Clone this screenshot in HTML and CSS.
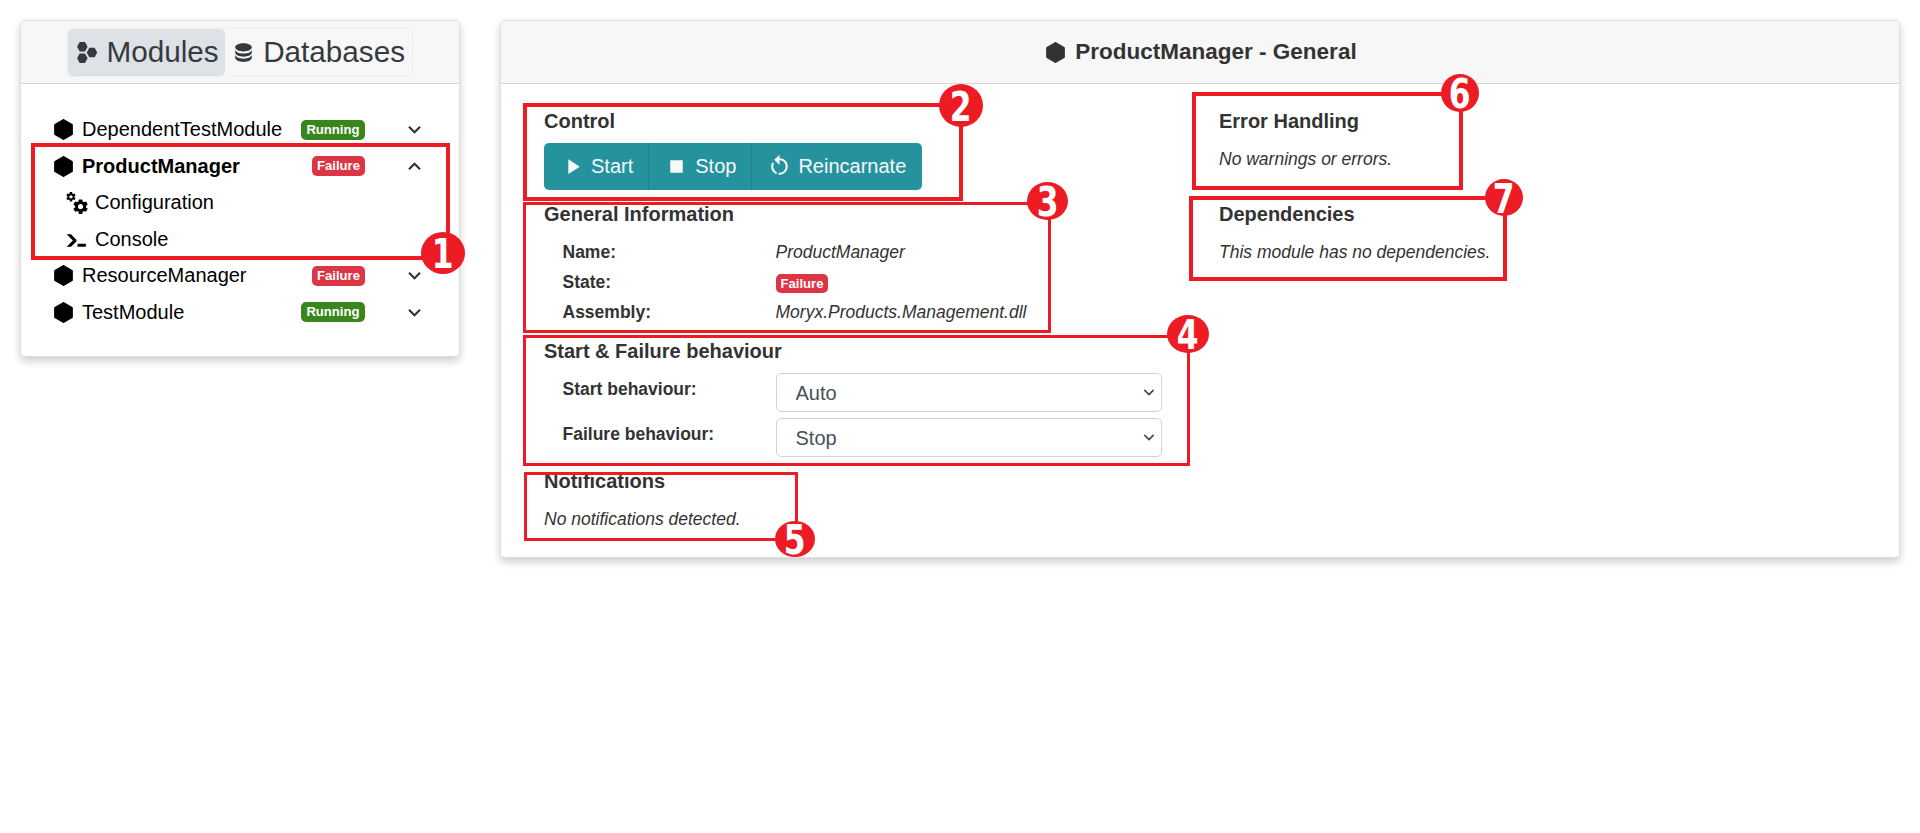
FILE: index.html
```html
<!DOCTYPE html>
<html lang="en">
<head>
    <meta charset="UTF-8">
    <meta name="viewport" content="width=device-width, initial-scale=1.0">
    <title>Modules</title>
    <link rel="stylesheet" href="styles.css">
</head>
<body>
    <div class="page">
        <aside class="card side">
            <div class="card-header">
                <nav class="pills">
                    <a class="pill active">
                        <svg class="icon" viewBox="0 0 24 24"><path d="M10.25,2C10.44,2 10.61,2.11 10.69,2.26L12.91,6.22L13,6.5L12.91,6.78L10.69,10.74C10.61,10.89 10.44,11 10.25,11H5.75C5.56,11 5.39,10.89 5.31,10.74L3.09,6.78L3,6.5L3.09,6.22L5.31,2.26C5.39,2.11 5.56,2 5.75,2H10.25M10.25,13C10.44,13 10.61,13.11 10.69,13.26L12.91,17.22L13,17.5L12.91,17.78L10.69,21.74C10.61,21.89 10.44,22 10.25,22H5.75C5.56,22 5.39,21.89 5.31,21.74L3.09,17.78L3,17.5L3.09,17.22L5.31,13.26C5.39,13.11 5.56,13 5.75,13H10.25M19.5,7.5C19.69,7.5 19.86,7.61 19.94,7.76L22.16,11.72L22.25,12L22.16,12.28L19.94,16.24C19.86,16.39 19.69,16.5 19.5,16.5H15C14.81,16.5 14.64,16.39 14.56,16.24L12.34,12.28L12.25,12L12.34,11.72L14.56,7.76C14.64,7.61 14.81,7.5 15,7.5H19.5Z"/></svg>
                        Modules
                    </a>
                    <a class="pill">
                        <svg class="icon" viewBox="0 0 24 24"><path d="M12,3C7.58,3 4,4.79 4,7C4,9.21 7.58,11 12,11C16.42,11 20,9.21 20,7C20,4.79 16.42,3 12,3M4,9V12C4,14.21 7.58,16 12,16C16.42,16 20,14.21 20,12V9C20,11.21 16.42,13 12,13C7.58,13 4,11.21 4,9M4,14V17C4,19.21 7.58,21 12,21C16.42,21 20,19.21 20,17V14C20,16.21 16.42,18 12,18C7.58,18 4,16.21 4,14Z"/></svg>
                        Databases
                    </a>
                </nav>
            </div>
            <ul class="modules">
                <li class="module">
                    <svg class="icon" viewBox="0 0 24 24"><use href="#hexagon"/></svg>
                    <span class="module-name">DependentTestModule</span>
                    <span class="badge running">Running</span>
                    <svg class="icon chevron" viewBox="0 0 24 24"><path d="M7.41,8.58L12,13.17L16.59,8.58L18,10L12,16L6,10L7.41,8.58Z"/></svg>
                </li>
                <li class="module selected">
                    <svg class="icon" viewBox="0 0 24 24"><use href="#hexagon"/></svg>
                    <span class="module-name">ProductManager</span>
                    <span class="badge failure">Failure</span>
                    <svg class="icon chevron" viewBox="0 0 24 24"><path d="M7.41,15.41L12,10.83L16.59,15.41L18,14L12,8L6,14L7.41,15.41Z"/></svg>
                </li>
                <li class="module sub">
                    <svg class="icon" viewBox="0 0 24 24"><path d="M15.9,18.45C17.25,18.45 18.35,17.35 18.35,16C18.35,14.65 17.25,13.55 15.9,13.55C14.54,13.55 13.45,14.65 13.45,16C13.45,17.35 14.54,18.45 15.9,18.45M21.1,16.68L22.58,17.84C22.71,17.95 22.75,18.13 22.66,18.29L21.26,20.71C21.17,20.86 21,20.92 20.83,20.86L19.09,20.16C18.73,20.44 18.34,20.67 17.91,20.85L17.64,22.7C17.62,22.87 17.47,23 17.3,23H14.5C14.32,23 14.18,22.87 14.15,22.7L13.89,20.85C13.46,20.67 13.07,20.44 12.71,20.16L10.96,20.86C10.81,20.92 10.62,20.86 10.54,20.71L9.14,18.29C9.05,18.13 9.09,17.95 9.22,17.84L10.7,16.68L10.65,16L10.7,15.31L9.22,14.16C9.09,14.05 9.05,13.86 9.14,13.71L10.54,11.29C10.62,11.13 10.81,11.07 10.96,11.13L12.71,11.84C13.07,11.56 13.46,11.32 13.89,11.15L14.15,9.29C14.18,9.13 14.32,9 14.5,9H17.3C17.47,9 17.62,9.13 17.64,9.29L17.91,11.15C18.34,11.32 18.73,11.56 19.09,11.84L20.83,11.13C21,11.07 21.17,11.13 21.26,11.29L22.66,13.71C22.75,13.86 22.71,14.05 22.58,14.16L21.1,15.31L21.15,16L21.1,16.68M6.69,8.07C7.56,8.07 8.26,7.37 8.26,6.5C8.26,5.63 7.56,4.92 6.69,4.92A1.58,1.58 0 0,0 5.11,6.5C5.11,7.37 5.82,8.07 6.69,8.07M10.03,6.94L11,7.68C11.07,7.75 11.09,7.87 11.03,7.97L10.13,9.53C10.08,9.63 9.96,9.67 9.86,9.63L8.74,9.18L8,9.62L7.81,10.81C7.79,10.92 7.7,11 7.59,11H5.79C5.67,11 5.58,10.92 5.56,10.81L5.4,9.62L4.64,9.18L3.5,9.63C3.41,9.67 3.3,9.63 3.24,9.53L2.34,7.97C2.28,7.87 2.31,7.75 2.39,7.68L3.34,6.94L3.31,6.5L3.34,6.06L2.39,5.32C2.31,5.25 2.28,5.13 2.34,5.03L3.24,3.47C3.3,3.37 3.41,3.33 3.5,3.37L4.63,3.82L5.4,3.38L5.56,2.19C5.58,2.08 5.67,2 5.79,2H7.59C7.7,2 7.79,2.08 7.81,2.19L8,3.38L8.74,3.82L9.86,3.37C9.96,3.33 10.08,3.37 10.13,3.47L11.03,5.03C11.09,5.13 11.07,5.25 11,5.32L10.03,6.06L10.06,6.5L10.03,6.94Z"/></svg>
                    <span class="module-name">Configuration</span>
                </li>
                <li class="module sub">
                    <svg class="icon" viewBox="0 0 24 24"><path d="M13,19V16H21V19H13M8.5,13L2.47,7H6.71L11.67,11.95C12.25,12.54 12.25,13.5 11.67,14.07L6.74,19H2.5L8.5,13Z"/></svg>
                    <span class="module-name">Console</span>
                </li>
                <li class="module">
                    <svg class="icon" viewBox="0 0 24 24"><use href="#hexagon"/></svg>
                    <span class="module-name">ResourceManager</span>
                    <span class="badge failure">Failure</span>
                    <svg class="icon chevron" viewBox="0 0 24 24"><path d="M7.41,8.58L12,13.17L16.59,8.58L18,10L12,16L6,10L7.41,8.58Z"/></svg>
                </li>
                <li class="module">
                    <svg class="icon" viewBox="0 0 24 24"><use href="#hexagon"/></svg>
                    <span class="module-name">TestModule</span>
                    <span class="badge running">Running</span>
                    <svg class="icon chevron" viewBox="0 0 24 24"><path d="M7.41,8.58L12,13.17L16.59,8.58L18,10L12,16L6,10L7.41,8.58Z"/></svg>
                </li>
            </ul>
        </aside>

        <main class="card detail">
            <div class="card-header detail-header">
                <svg class="icon" viewBox="0 0 24 24"><use href="#hexagon"/></svg>
                <h4>ProductManager - General</h4>
            </div>
            <div class="detail-body">
                <div class="column">
                    <section>
                        <h5>Control</h5>
                        <div class="btn-group">
                            <button class="btn" type="button">
                                <svg class="icon" viewBox="0 0 24 24"><path d="M8,5.14V19.14L19,12.14L8,5.14Z"/></svg>
                                Start
                            </button>
                            <button class="btn" type="button">
                                <svg class="icon" viewBox="0 0 24 24"><path d="M18,18H6V6H18V18Z"/></svg>
                                Stop
                            </button>
                            <button class="btn" type="button">
                                <svg class="icon" viewBox="0 0 24 24"><path d="M12,4C14.1,4 16.1,4.8 17.6,6.3C20.7,9.4 20.7,14.5 17.6,17.6C15.8,19.5 13.3,20.2 10.9,19.9L11.4,17.9C13.1,18.1 14.9,17.5 16.2,16.2C18.5,13.9 18.5,10.1 16.2,7.7C15.1,6.6 13.5,6 12,6V10.6L7,5.6L12,0.6V4M6.3,17.6C3.7,15 3.3,11 5.1,7.9L6.6,9.4C5.5,11.6 5.9,14.4 7.8,16.2C8.3,16.7 8.9,17.1 9.6,17.4L9,19.4C8,19 7.1,18.4 6.3,17.6Z"/></svg>
                                Reincarnate
                            </button>
                        </div>
                    </section>
                    <section>
                        <h5 class="tight">General Information</h5>
                        <div class="info-row"><span class="label">Name:</span><em>ProductManager</em></div>
                        <div class="info-row"><span class="label">State:</span><span class="badge failure state">Failure</span></div>
                        <div class="info-row"><span class="label">Assembly:</span><em>Moryx.Products.Management.dll</em></div>
                    </section>
                    <section>
                        <h5>Start &amp; Failure behaviour</h5>
                        <div class="form-row">
                            <label class="label" for="startBehaviour">Start behaviour:</label>
                            <select id="startBehaviour"><option>Auto</option></select>
                        </div>
                        <div class="form-row">
                            <label class="label" for="failureBehaviour">Failure behaviour:</label>
                            <select id="failureBehaviour"><option>Stop</option></select>
                        </div>
                    </section>
                    <section>
                        <h5>Notifications</h5>
                        <p class="note">No notifications detected.</p>
                    </section>
                </div>
                <div class="column">
                    <section>
                        <h5>Error Handling</h5>
                        <p class="note">No warnings or errors.</p>
                    </section>
                    <section class="spaced">
                        <h5>Dependencies</h5>
                        <p class="note">This module has no dependencies.</p>
                    </section>
                </div>
            </div>
        </main>
    </div>

    <!-- red callouts drawn over the screenshot -->
    <div class="frame frame-1 thick"></div>
    <div class="frame frame-2 thick"></div>
    <div class="frame frame-3"></div>
    <div class="frame frame-4"></div>
    <div class="frame frame-5"></div>
    <div class="frame frame-6 thick"></div>
    <div class="frame frame-7 thick"></div>
    <div class="callout callout-1"><span>1</span></div>
    <div class="callout callout-2"><span>2</span></div>
    <div class="callout callout-3"><span>3</span></div>
    <div class="callout callout-4"><span>4</span></div>
    <div class="callout callout-5"><span>5</span></div>
    <div class="callout callout-6"><span>6</span></div>
    <div class="callout callout-7"><span>7</span></div>

    <svg class="defs" aria-hidden="true">
        <symbol id="hexagon" viewBox="0 0 24 24"><path d="M21,16.5C21,16.88 20.79,17.21 20.47,17.38L12.57,21.82C12.41,21.94 12.21,22 12,22C11.79,22 11.59,21.94 11.43,21.82L3.53,17.38C3.21,17.21 3,16.88 3,16.5V7.5C3,7.12 3.21,6.79 3.53,6.62L11.43,2.18C11.59,2.06 11.79,2 12,2C12.21,2 12.41,2.06 12.57,2.18L20.47,6.62C20.79,6.79 21,7.12 21,7.5V16.5Z"/></symbol>
    </svg>
</body>
</html>
```

FILE: styles.css
```css
* { box-sizing: border-box; }
body { margin: 0; background: #fff; color: #333; font-family: "Liberation Sans", Arial, sans-serif; font-size: 20px; }
h4, h5, p, ul { margin: 0; padding: 0; }
.defs { display: none; }
.icon { width: 25px; height: 25px; flex: none; fill: currentColor; }

.page { display: flex; align-items: flex-start; gap: 40px; padding: 20px; }
.card { background: #fff; border: 1px solid rgba(0,0,0,.125); border-radius: 5px; box-shadow: 0 4px 8px rgba(0,0,0,.2); overflow: hidden; }
.card-header { display: flex; align-items: center; justify-content: center; height: 63px; background: #f7f7f7; border-bottom: 1px solid rgba(0,0,0,.125); }

.side { flex: none; width: 440px; height: 337px; }
.pills { display: flex; height: 49px; border: 1px solid #efefef; border-radius: 5px; }
.pill { display: flex; align-items: center; gap: 7px; padding: 0 6.5px 0 6px; color: #343a40; font-size: 29.7px; border-radius: 5px; }
.pill.active { background: #dee2e6; }

.modules { list-style: none; padding-top: 27.5px; }
.module { display: flex; align-items: center; gap: 6px; height: 36.5px; padding: 0 32px 0 30px; color: #000; }
.module-name { flex: 1; }
.module.selected .module-name { font-weight: bold; }
.module.sub { padding-left: 43px; }
.badge { display: inline-block; padding: 0 5.5px; height: 19px; line-height: 19px; border-radius: 5px; color: #fff; font-size: 13.1px; font-weight: bold; }
.module .badge { height: 20px; line-height: 20px; }
.running { background: #38861c; }
.failure { background: #dc3545; padding: 0 5px; }
.state { margin-top: 2px; }
.chevron { margin-left: 31px; color: #333; }

.detail { flex: 1; height: 538px; }
.detail-header { gap: 7px; }
.detail-header h4 { font-size: 22.5px; font-weight: bold; }
.detail-body { display: grid; grid-template-columns: 618px 1fr; column-gap: 57px; padding: 25px 0 0 43px; }

section + section { margin-top: 12px; }
section.spaced { margin-top: 30px; }
h5 { font-size: 20px; line-height: 24px; font-weight: bold; margin-bottom: 10px; }
h5.tight { margin-bottom: 11px; }
.note { font-size: 17.5px; line-height: 26px; font-style: italic; margin-top: 13px; }

.btn-group { display: inline-flex; height: 47px; border-radius: 5px; overflow: hidden; }
.btn { display: flex; align-items: center; gap: 6px; height: 47px; padding: 0 15px; background: #25939e; border: 1px solid #1f7f89; border-width: 0 1px 0 0; color: #f8f9fa; font-family: inherit; font-size: 20px; }
.btn:first-child { padding-left: 16px; }
.btn:last-child { border-right: 0; padding-right: 16px; }

.info-row { display: flex; align-items: center; height: 30px; padding-left: 18.5px; font-size: 17.5px; }
.label { flex: none; width: 213px; font-size: 17.5px; font-weight: bold; }
.form-row { display: flex; align-items: flex-start; padding-left: 18.5px; margin-bottom: 6px; }
.form-row .label { line-height: 26px; padding-top: 3px; }
.form-row:last-child { margin-bottom: 0; }
select { appearance: none; width: 386.5px; height: 39px; padding: 0 19px; background: #fff url("data:image/svg+xml,%3csvg xmlns='http://www.w3.org/2000/svg' viewBox='0 0 16 16'%3e%3cpath fill='none' stroke='%23495057' stroke-linecap='round' stroke-linejoin='round' stroke-width='2.6' d='M2 5l6 6 6-6'/%3e%3c/svg%3e") no-repeat right 5px center / 14px 11px; border: 1px solid #ced4da; border-radius: 5px; color: #495057; font-family: inherit; font-size: 20px; }

.frame { position: absolute; border: 3px solid #ed1c24; }
.frame.thick { border-width: 4.5px; }
.frame-1 { left: 31px; top: 143px; width: 419px; height: 117px; }
.frame-2 { left: 523px; top: 103px; width: 440px; height: 98px; }
.frame-3 { left: 523px; top: 202px; width: 528px; height: 131px; }
.frame-4 { left: 523px; top: 335px; width: 667px; height: 131px; }
.frame-5 { left: 524px; top: 472px; width: 274px; height: 69px; }
.frame-6 { left: 1192px; top: 92px; width: 271px; height: 98px; }
.frame-7 { left: 1189px; top: 196px; width: 318px; height: 85px; }

.callout { position: absolute; display: flex; align-items: center; justify-content: center; border-radius: 50%; background: #ed1c24; color: #fff; font-family: "DejaVu Sans", sans-serif; font-stretch: condensed; font-size: 40px; font-weight: bold; line-height: 1; }
.callout span { display: block; margin-top: 2px; transform: scaleX(.87); }
.callout-1 { left: 421px; top: 232px; width: 44px; height: 42px; }
.callout-2 { left: 939px; top: 84px; width: 44px; height: 43px; }
.callout-3 { left: 1027px; top: 182px; width: 41px; height: 38px; }
.callout-4 { left: 1167px; top: 315px; width: 42px; height: 38px; }
.callout-5 { left: 775px; top: 521px; width: 40px; height: 36px; }
.callout-6 { left: 1441px; top: 74px; width: 38px; height: 38px; }
.callout-7 { left: 1485px; top: 179px; width: 38px; height: 37px; }
```
